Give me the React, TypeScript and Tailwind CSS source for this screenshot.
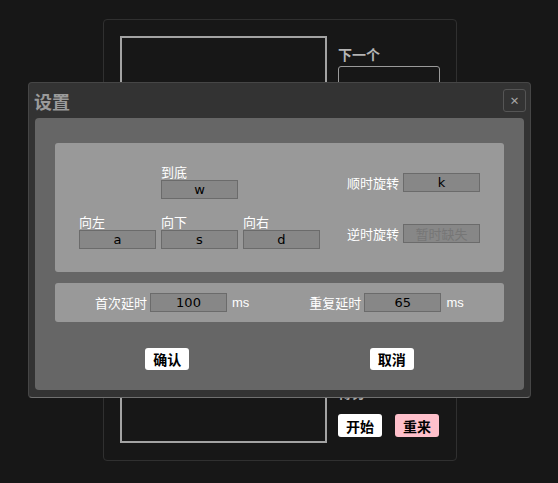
const cjk = { fontFamily: '"Noto Sans CJK SC", "Microsoft YaHei", sans-serif' }

function KeyInput({ value, placeholder }: { value?: string; placeholder?: string }) {
  return (
    <div className="w-[77px] h-[19px] bg-[#878787] border border-[#6b6b6b] flex items-center justify-center text-[13px] leading-none">
      {value ? (
        <span className="text-black" style={{ fontFamily: '"DejaVu Sans", sans-serif' }}>{value}</span>
      ) : (
        <span className="text-[#767676]" style={cjk}>{placeholder}</span>
      )}
    </div>
  )
}

function Labeled({ label, value }: { label: string; value: string }) {
  return (
    <div className="flex flex-col">
      <span className="text-white text-[13px] leading-[17px]" style={cjk}>{label}</span>
      <KeyInput value={value} />
    </div>
  )
}

function SettingsDialog() {
  return (
    <div className="absolute left-[28px] top-[82px] w-[503px] h-[316px] bg-[#333333] border border-[#464646] border-b-[#707070] rounded-[4px] flex flex-col">
      {/* 标题栏 */}
      <div className="flex items-center justify-between h-[35px] pl-[5px] pr-[4px]">
        <span className="text-[18px] font-bold text-[#9b9b9b] leading-none" style={cjk}>设置</span>
        <button className="w-[23px] h-[23px] border border-[#555] rounded-[3px] flex items-center justify-center text-[#a8a8a8] text-[15px] leading-none">
          ×
        </button>
      </div>

      <div className="mx-[6px] h-[272px] bg-[#666666] rounded-[4px] px-[20px] pt-[25px]">
        {/* 按键 */}
        <div className="h-[129px] bg-[#999999] rounded-[3px] flex justify-between px-[24px] pt-[20px]">
          <div className="flex flex-col">
            <div className="pl-[82px]">
              <Labeled label="到底" value="w" />
            </div>
            <div className="flex gap-[5px] mt-[14px]">
              <Labeled label="向左" value="a" />
              <Labeled label="向下" value="s" />
              <Labeled label="向右" value="d" />
            </div>
          </div>
          <div className="flex flex-col items-end pt-[10px] gap-[31px]">
            <div className="flex items-center gap-[4px]">
              <span className="text-white text-[13px]" style={cjk}>顺时旋转</span>
              <KeyInput value="k" />
            </div>
            <div className="flex items-center gap-[4px]">
              <span className="text-white text-[13px]" style={cjk}>逆时旋转</span>
              <KeyInput placeholder="暂时缺失" />
            </div>
          </div>
        </div>

        {/* 延时 */}
        <div className="mt-[11px] h-[39px] bg-[#999999] rounded-[3px] flex items-center pl-[40px]">
          <div className="flex items-center gap-[3px]">
            <span className="text-white text-[13px]" style={cjk}>首次延时</span>
            <KeyInput value="100" />
            <span className="text-white text-[13px] ml-[2px]" style={{ fontFamily: '"Liberation Sans", sans-serif' }}>ms</span>
          </div>
          <div className="flex items-center gap-[3px] ml-[60px]">
            <span className="text-white text-[13px]" style={cjk}>重复延时</span>
            <KeyInput value="65" />
            <span className="text-white text-[13px] ml-[2px]" style={{ fontFamily: '"Liberation Sans", sans-serif' }}>ms</span>
          </div>
        </div>

        <div className="flex mt-[26px]">
          <div className="flex-1 flex justify-center">
            <button className="w-[44px] h-[22px] bg-white rounded-[3px] text-black font-bold text-[14px] leading-none" style={cjk}>确认</button>
          </div>
          <div className="flex-1 flex justify-center">
            <button className="w-[44px] h-[22px] bg-white rounded-[3px] text-black font-bold text-[14px] leading-none" style={cjk}>取消</button>
          </div>
        </div>
      </div>
    </div>
  )
}

export default function App() {
  return (
    <div className="relative w-[558px] h-[483px] bg-[#171717] overflow-hidden pt-[19px] pl-[103px]">
      <div className="w-[354px] h-[442px] border border-[#303030] rounded-[4px] flex pl-[16px] pt-[16px] pb-[16px]">
        <div className="w-[207px] h-[407px] border-2 border-[#a3a3a3]" />
        <div className="ml-[11px] flex flex-col h-[407px]">
          <span className="mt-[10px] text-[14px] leading-[16px] font-bold text-[#b4b4b4]" style={cjk}>下一个</span>
          <div className="mt-[4px] w-[102px] h-[100px] border border-[#9a9a9a] rounded-[3px]" />
          <div className="flex-1" />
          <span className="text-[14px] leading-[16px] font-bold text-[#a8a8a8]" style={cjk}>得分 0</span>
          <div className="flex gap-[13px] mt-[14px] mb-[6px]">
            <button className="w-[44px] h-[23px] bg-white rounded-[3px] text-black font-bold text-[14px] leading-none" style={cjk}>开始</button>
            <button className="w-[44px] h-[23px] bg-[#ffc0cb] rounded-[3px] text-black font-bold text-[14px] leading-none" style={cjk}>重来</button>
          </div>
        </div>
      </div>
      <SettingsDialog />
    </div>
  )
}
